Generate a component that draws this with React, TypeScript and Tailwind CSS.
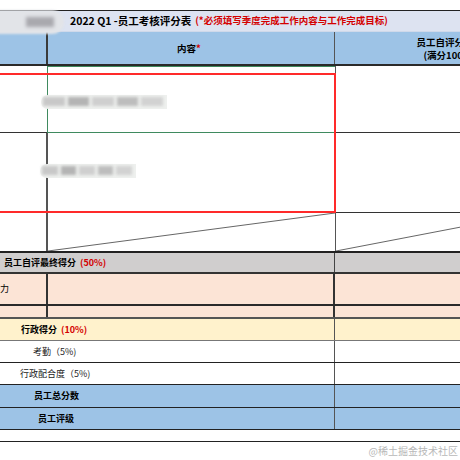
import React from "react";

const font = { fontFamily: '"Noto Sans CJK SC", "Noto Sans", sans-serif' };

function Diag({ w, h, x2 }: { w: number; h: number; x2?: number }) {
  return (
    <svg width={w} height={h} className="block absolute left-0 top-0">
      <line x1={0} y1={h} x2={x2 ?? w} y2={0} stroke="#666" strokeWidth={1} />
    </svg>
  );
}

function Blur({ w }: { w: number }) {
  return (
    <div className="flex items-center h-[14px] rounded-l-full bg-[#eef0ee] pl-[2px] pr-[4px]">
      <div className="h-[9px] blur-[1.5px] flex gap-[3px]" style={{ width: w }}>
        <div className="flex-1 bg-[#c8c8c8]" />
        <div className="flex-1 bg-[#b4b4b4]" />
        <div className="flex-1 bg-[#cfcfcf]" />
        <div className="flex-1 bg-[#bdbdbd]" />
        <div className="flex-1 bg-[#d2d2d2]" />
      </div>
    </div>
  );
}

export default function App() {
  return (
    <div className="relative w-[460px] h-[460px] overflow-hidden bg-white" style={font}>
      <div className="h-[10px]" />
      {/* title row */}
      <div className="relative flex items-center h-[21px] border-t border-[#222] bg-[#dde3f1] pl-[70px] whitespace-nowrap">
        <span className="text-[10.5px] font-bold text-black leading-none">2022 Q1 -员工考核评分表</span>
        <span className="text-[9.5px] font-bold text-[#d40000] leading-none ml-[4px]">(*必须填写季度完成工作内容与工作完成目标)</span>
        <div className="absolute left-[-6px] top-[-1px] h-[24px] w-[70px] rounded-r-full bg-[#e2e4e8] blur-[1px] flex items-center pl-[32px]">
          <div className="h-[10px] w-[28px] bg-[#a9a9ae] blur-[1.5px]" />
        </div>
      </div>
      {/* header row */}
      <div className="flex h-[35px] bg-[#9dc3e6] border-b-2 border-[#2a2a2a] border-t border-t-[#cfd9ea]">
        <div className="w-[48px] shrink-0 border-r-2 border-[#3a3a3a]" />
        <div className="w-[287px] shrink-0 border-r border-[#555] flex items-center justify-center pr-[4px]">
          <span className="text-[9.5px] font-bold text-black">内容<span className="text-[#d40000]">*</span></span>
        </div>
        <div className="w-[220px] shrink-0 flex flex-col items-center justify-center text-[9.5px] font-bold text-black leading-[13px] pt-[1px]">
          <span>员工自评分数</span>
          <span>(满分100)</span>
        </div>
      </div>
      {/* row A */}
      <div className="flex h-[67px] border-b border-[#333]">
        <div className="w-[47px] shrink-0" />
        <div className="w-[288px] shrink-0 border-l border-t border-[#3f8a5f] border-b border-b-[#3f8a5f] -mb-px flex items-center pt-[4px]">
          <div className="-ml-[7px]"><Blur w={120} /></div>
        </div>
        <div className="w-[230px] shrink-0 border-l border-[#555]" />
      </div>
      {/* row B */}
      <div className="flex h-[80px] border-b border-[#333]">
        <div className="w-[48px] shrink-0 border-r-2 border-[#555]" />
        <div className="w-[287px] shrink-0 flex items-center pb-[4px]">
          <div className="-ml-[8px]"><Blur w={90} /></div>
        </div>
        <div className="w-[230px] shrink-0 border-l border-[#555]" />
      </div>
      {/* row C diagonals */}
      <div className="flex h-[40px] border-b-2 border-[#222]">
        <div className="w-[48px] shrink-0 border-r-2 border-[#555]" />
        <div className="relative w-[287px] h-full shrink-0">
          <Diag w={287} h={38} />
        </div>
        <div className="relative w-[230px] h-full shrink-0 border-l border-[#555]">
          <Diag w={230} h={38} x2={198} />
        </div>
      </div>
      {/* gray row */}
      <div className="flex h-[21px] bg-[#d0cece] border-b-2 border-[#333]">
        <div className="w-[335px] shrink-0 border-r border-[#444] flex items-center pl-[4px]">
          <span className="text-[9px] font-bold text-black whitespace-nowrap">员工自评最终得分 <span className="text-[#d40000] ml-[2px]">(50%)</span></span>
        </div>
        <div className="flex-1" />
      </div>
      {/* peach rows */}
      <div className="flex h-[32px] bg-[#fce4d6] border-b-2 border-[#2a2a2a]">
        <div className="w-[48px] shrink-0 border-r-2 border-[#333] flex items-center">
          <span className="text-[9px] text-black ml-0">力</span>
        </div>
        <div className="w-[287px] shrink-0 border-r-2 border-[#333]" />
        <div className="flex-1" />
      </div>
      <div className="flex h-[13px] bg-[#fce4d6] border-b-2 border-[#555]">
        <div className="w-[48px] shrink-0 border-r-2 border-[#333]" />
        <div className="w-[287px] shrink-0 border-r-2 border-[#333]" />
        <div className="flex-1" />
      </div>
      {/* yellow */}
      <div className="flex h-[22px] bg-[#fff2cc] border-b border-[#777]">
        <div className="w-[335px] shrink-0 border-r border-[#555] flex items-center pl-[21px]">
          <span className="text-[9px] font-bold text-black whitespace-nowrap">行政得分 <span className="text-[#d40000] ml-[2px]">(10%)</span></span>
        </div>
        <div className="flex-1" />
      </div>
      <div className="flex h-[22px] border-b border-[#222]">
        <div className="w-[335px] shrink-0 border-r border-[#555] flex items-center pl-[33px]">
          <span className="text-[9px] text-[#222] whitespace-nowrap">考勤（5%)</span>
        </div>
        <div className="flex-1" />
      </div>
      <div className="flex h-[22px] border-b border-[#222]">
        <div className="w-[335px] shrink-0 border-r border-[#555] flex items-center pl-[20px]">
          <span className="text-[9px] text-[#222] whitespace-nowrap">行政配合度（5%)</span>
        </div>
        <div className="flex-1" />
      </div>
      {/* blue rows */}
      <div className="flex h-[23px] bg-[#9dc3e6] border-b border-[#222]">
        <div className="w-[335px] shrink-0 border-r border-[#555] flex items-center pl-[34px]">
          <span className="text-[9px] font-bold text-black whitespace-nowrap">员工总分数</span>
        </div>
        <div className="flex-1" />
      </div>
      <div className="flex h-[22px] bg-[#9dc3e6] border-b border-[#222]">
        <div className="w-[335px] shrink-0 border-r border-[#555] flex items-center pl-[38px]">
          <span className="text-[9px] font-bold text-black whitespace-nowrap">员工评级</span>
        </div>
        <div className="flex-1" />
      </div>
      <div className="h-[12px] border-b border-[#222]" />

      {/* red selection overlay */}
      <div className="absolute left-[-3px] top-[73px] w-[339px] h-[140px] border-2 border-[#ff2a2a] pointer-events-none" />
      {/* watermark */}
      <div className="absolute right-[2px] bottom-[2px] text-[10px] text-[#b8b8b8] whitespace-nowrap">@稀土掘金技术社区</div>
    </div>
  );
}
